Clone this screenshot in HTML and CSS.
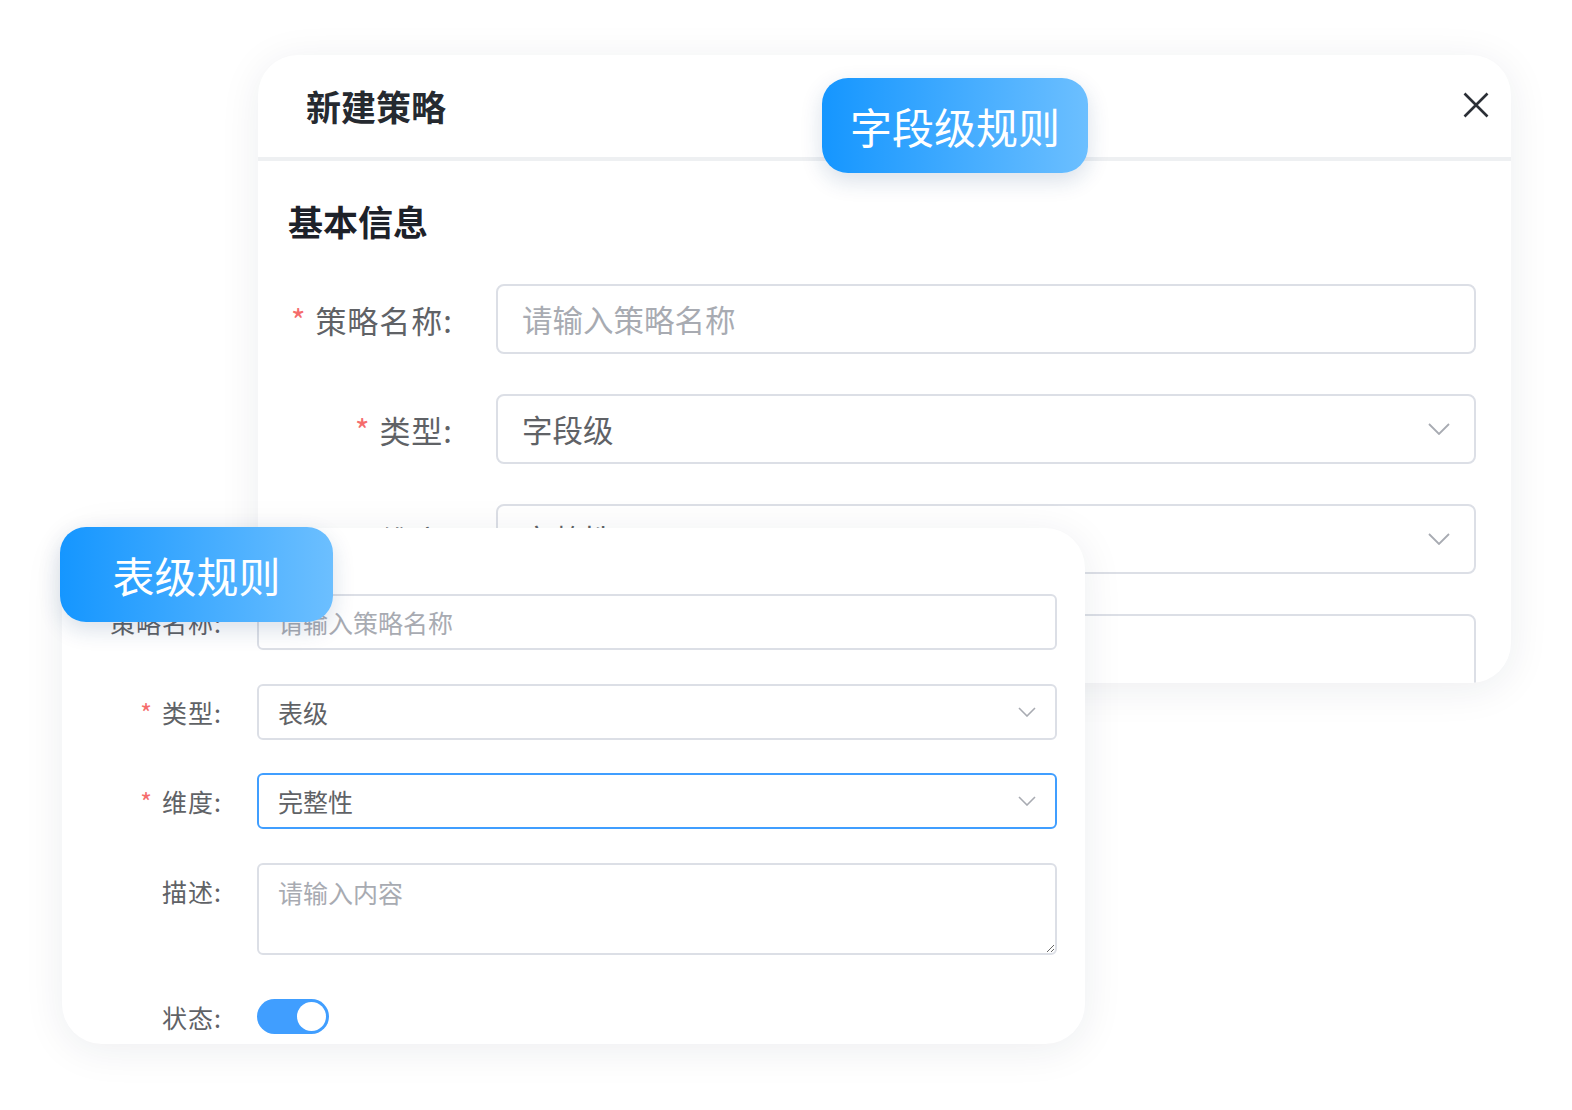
FILE: index.html
```html
<!DOCTYPE html>
<html>
<head>
    <meta name="viewport" content="width=device-width, initial-scale=1.0">
    <title>新建策略</title>
    <link rel="stylesheet" href="styles.css">
</head>
<body>
<div class="stage">
    <!-- back dialog: field level rule -->
    <section class="dialog dialog-field">
        <header class="dialog-head">
            <h2 class="dialog-title">新建策略</h2>
            <span class="close">
                <svg width="26" height="26" viewBox="0 0 26 26"><path d="M1.5 1.5 L24.5 24.5 M24.5 1.5 L1.5 24.5" stroke="#2b2f36" stroke-width="2.6" fill="none"/></svg>
            </span>
        </header>
        <div class="dialog-body">
            <h3 class="section-title">基本信息</h3>
            <form class="form form-lg">
                <div class="row">
                    <label class="label req">策略名称:</label>
                    <input class="control" type="text" placeholder="请输入策略名称" readonly>
                </div>
                <div class="row">
                    <label class="label req">类型:</label>
                    <div class="control select">
                        <span>字段级</span>
                        <svg class="chevron" width="22" height="12" viewBox="0 0 22 12"><polyline points="1,1 11,11 21,1" fill="none" stroke="#a8abb2" stroke-width="1.8"/></svg>
                    </div>
                </div>
                <div class="row">
                    <label class="label req">维度:</label>
                    <div class="control select">
                        <span>完整性</span>
                        <svg class="chevron" width="22" height="12" viewBox="0 0 22 12"><polyline points="1,1 11,11 21,1" fill="none" stroke="#a8abb2" stroke-width="1.8"/></svg>
                    </div>
                </div>
                <div class="row row-top">
                    <label class="label">描述:</label>
                    <textarea class="control area" placeholder="请输入内容" readonly></textarea>
                </div>
            </form>
        </div>
        <span class="badge badge-field">字段级规则</span>
    </section>

    <!-- front dialog: table level rule -->
    <section class="dialog dialog-table">
        <form class="form form-sm">
            <div class="row">
                <label class="label req">策略名称:</label>
                <input class="control" type="text" placeholder="请输入策略名称" readonly>
            </div>
            <div class="row">
                <label class="label req">类型:</label>
                <div class="control select">
                    <span>表级</span>
                    <svg class="chevron" width="18" height="10" viewBox="0 0 18 10"><polyline points="1,1 9,9 17,1" fill="none" stroke="#a8abb2" stroke-width="1.6"/></svg>
                </div>
            </div>
            <div class="row">
                <label class="label req">维度:</label>
                <div class="control select focus">
                    <span>完整性</span>
                    <svg class="chevron" width="18" height="10" viewBox="0 0 18 10"><polyline points="1,1 9,9 17,1" fill="none" stroke="#a8abb2" stroke-width="1.6"/></svg>
                </div>
            </div>
            <div class="row row-top">
                <label class="label">描述:</label>
                <textarea class="control area" placeholder="请输入内容" readonly></textarea>
            </div>
            <div class="row">
                <label class="label">状态:</label>
                <span class="switch"><span class="knob"></span></span>
            </div>
        </form>
        <span class="badge badge-table">表级规则</span>
    </section>
</div>
</body>
</html>
```

FILE: styles.css
```css
* {
    margin: 0;
    padding: 0;
    box-sizing: border-box;
}
body {
    background: #fff;
    font-family: "Noto Sans CJK SC", "Noto Sans", sans-serif;
    color: #606266;
}
.stage {
    position: relative;
    width: 1572px;
    height: 1110px;
    overflow: hidden;
    padding: 55px 0 0 258px;
}
.dialog {
    background: #fff;
    border-radius: 40px;
    box-shadow: 0 6px 40px rgba(30, 40, 70, 0.08);
}
.dialog-field {
    position: relative;
    width: 1253px;
    height: 628px;
    overflow: hidden;
}
.dialog-head {
    display: flex;
    align-items: center;
    justify-content: space-between;
    height: 106px;
    padding: 0 22px 2px 48px;
    border-bottom: 4px solid #eef0f2;
}
.dialog-title {
    font-size: 35px;
    font-weight: 700;
    color: #262a30;
}
.close {
    display: flex;
    width: 26px;
    height: 26px;
}
.dialog-body {
    padding: 0 35px 0 30px;
}
.section-title {
    margin: 40px 0 43px;
    font-size: 35px;
    line-height: 40px;
    font-weight: 700;
    color: #1d2129;
}

/* form rows */
.form {
    display: flex;
    flex-direction: column;
}
.row {
    display: flex;
    align-items: center;
}
.row-top {
    align-items: flex-start;
}
.label {
    flex: none;
    text-align: right;
    color: #606266;
    white-space: nowrap;
    letter-spacing: 1px;
}
.req::before {
    content: "*";
    color: #f56c6c;
    margin-right: 9px;
}
.control {
    flex: 1;
    display: flex;
    align-items: center;
    justify-content: space-between;
    border: 2px solid #dcdfe6;
    background: #fff;
    font-family: inherit;
    color: #606266;
    outline: 0;
}
.control::placeholder {
    color: #a8abb2;
}
.control.focus {
    border-color: #409eff;
}
.area {
    display: block;
    resize: vertical;
}

.form-lg {
    gap: 40px;
}
.form-lg .label {
    width: 208px;
    padding-right: 43px;
    font-size: 31px;
}
.form-lg .row-top .label {
    line-height: 70px;
}
.form-lg .control {
    height: 70px;
    padding: 0 24px;
    border-radius: 8px;
    font-size: 30.5px;
}
.form-lg .area {
    height: 110px;
    padding: 14px 24px;
}

.dialog-table {
    position: absolute;
    left: 62px;
    top: 528px;
    width: 1023px;
    height: 516px;
    padding: 66px 28px 0 0;
}
.form-sm {
    gap: 33.5px;
}
.form-sm .label {
    width: 195px;
    padding-right: 35px;
    font-size: 25px;
}
.form-sm .row-top .label {
    line-height: 56px;
}
.form-sm .control {
    height: 56px;
    padding: 0 19px;
    border-radius: 6px;
    font-size: 25px;
}
.form-sm .area {
    height: 92.5px;
    padding: 11px 19px;
    line-height: 32px;
}
.form-sm .row:last-child {
    height: 56px;
}

.switch {
    display: flex;
    align-items: center;
    justify-content: flex-end;
    width: 72px;
    height: 35px;
    padding: 0 3px;
    border-radius: 18px;
    background: #409eff;
}
.knob {
    width: 29px;
    height: 29px;
    border-radius: 50%;
    background: #fff;
}

.badge {
    position: absolute;
    display: flex;
    align-items: center;
    justify-content: center;
    height: 95px;
    border-radius: 26px;
    background: linear-gradient(90deg, #1596ff, #6cbfff);
    color: #fff;
    font-size: 42px;
    box-shadow: 0 8px 22px rgba(20, 60, 120, 0.16);
}
.badge-field {
    left: 564px;
    top: 23px;
    width: 266px;
}
.badge-table {
    left: -2px;
    top: -1px;
    width: 273px;
}
```
